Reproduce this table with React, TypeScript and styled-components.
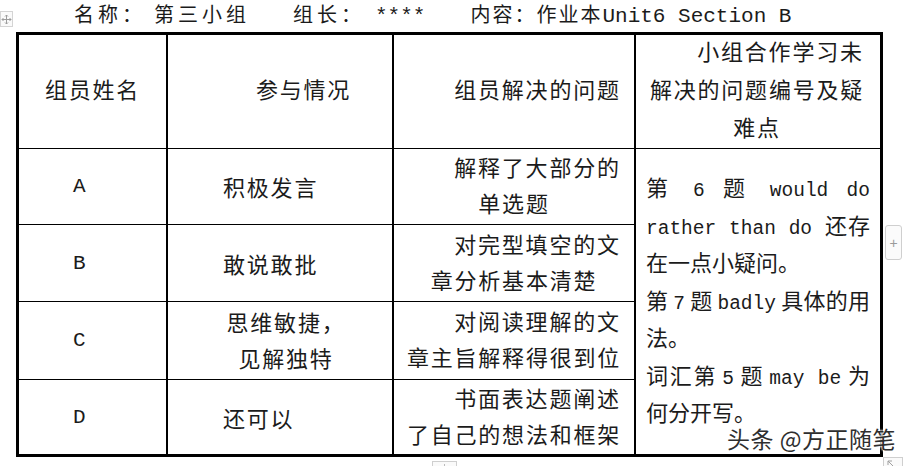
import React from "react";
import styled, { createGlobalStyle } from "styled-components";

const Global = createGlobalStyle`
  html, body { margin: 0; padding: 0; background: #fff; }
  body {
    font-family: "Noto Sans CJK SC", "Noto Sans", sans-serif;
    color: #1b1b1b;
    width: 910px;
    height: 466px;
    overflow: hidden;
  }
`;

const Page = styled.div`
  position: relative;
  width: 910px;
  height: 466px;
  box-sizing: border-box;
  padding-left: 16px;
  display: flex;
  flex-direction: column;
`;

const TitleBar = styled.div`
  height: 32px;
  flex: none;
  display: flex;
  align-items: center;
  padding-bottom: 4px;
  box-sizing: border-box;
  font-size: 20px;
  line-height: 28px;
  white-space: pre;
`;

const Field = styled.span<{ $ml: number; $ls: number }>`
  margin-left: ${(p) => p.$ml}px;
  letter-spacing: ${(p) => p.$ls}px;
`;

const Latin = styled.span<{ $size: number; $mx?: number }>`
  font-family: "Liberation Mono", monospace;
  font-size: ${(p) => p.$size}px;
  line-height: 1;
  letter-spacing: 0;
  margin: 0 ${(p) => p.$mx ?? 0}px;
`;

const Table = styled.div`
  display: grid;
  grid-template-columns: 149px 226px 242px 244px;
  grid-template-rows: 114px 76px 77px 78px 74px;
  width: 867px;
  flex: none;
  box-sizing: border-box;
  border: 3px solid #000;
`;

type CellProps = {
  $align?: "left" | "center";
  $pl?: number;
  $pr?: number;
  $pb?: number;
  $lastCol?: boolean;
  $lastRow?: boolean;
  $span?: number;
  $lh?: number;
  $ls?: number;
};

const Cell = styled.div<CellProps>`
  box-sizing: border-box;
  min-width: 0;
  border-right: ${(p) => (p.$lastCol ? "none" : "2px solid #000")};
  border-bottom: ${(p) => (p.$lastRow ? "none" : "1px solid #000")};
  grid-row: ${(p) => (p.$span ? `span ${p.$span}` : "auto")};
  display: flex;
  flex-direction: column;
  justify-content: center;
  padding-left: ${(p) => p.$pl ?? 0}px;
  padding-right: ${(p) => p.$pr ?? 0}px;
  padding-bottom: ${(p) => p.$pb ?? 0}px;
  text-align: ${(p) => p.$align ?? "center"};
  font-size: 22px;
  letter-spacing: ${(p) => p.$ls ?? 1.8}px;
  line-height: ${(p) => p.$lh ?? 37}px;
`;

const Line = styled.div<{ $indent?: boolean; $justify?: boolean }>`
  white-space: nowrap;
  text-indent: ${(p) => (p.$indent ? "47px" : "0")};
  ${(p) => (p.$justify ? `text-align: justify; text-align-last: justify;` : "")}
`;

const Watermark = styled.div`
  position: absolute;
  left: 727px;
  top: 424px;
  font-size: 23px;
  line-height: 28px;
  color: #2e2e2e;
  letter-spacing: 0.5px;
  white-space: pre;
  text-shadow: 0 0 2px #fff, 0 0 2px #fff, 0 0 3px #fff;
`;

const MoveHandle = styled.div`
  position: absolute;
  left: 0;
  top: 11px;
  width: 13px;
  height: 16px;
  box-sizing: border-box;
  border: 1px solid #d4d4d4;
  background: #fafafa;
  display: flex;
  align-items: center;
  justify-content: center;
`;

const AddButton = styled.div`
  position: absolute;
  left: 885px;
  top: 225px;
  width: 17px;
  height: 35px;
  box-sizing: border-box;
  border: 1px solid #cfcfcf;
  border-radius: 3px;
  background: #fbfbfb;
  color: #9a9a9a;
  font-family: "Liberation Sans", sans-serif;
  font-size: 14px;
  display: flex;
  align-items: center;
  justify-content: center;
`;

const BottomHandle = styled.div`
  position: absolute;
  left: 432px;
  top: 461px;
  width: 25px;
  height: 10px;
  box-sizing: border-box;
  border: 1px solid #cfcfcf;
  background: #fafafa;
  &::after {
    content: "";
    position: absolute;
    left: 11px;
    top: 2px;
    width: 1px;
    height: 6px;
    background: #bbb;
  }
`;

const CornerHandle = styled.div`
  position: absolute;
  left: 883px;
  top: 457px;
  width: 20px;
  height: 12px;
  box-sizing: border-box;
  border: 1px solid #cfcfcf;
  background: #fafafa;
  display: flex;
  align-items: flex-start;
  justify-content: flex-start;
  padding: 2px 0 0 3px;
`;

export default function App() {
  return (
    <>
      <Global />
      <Page>
        <TitleBar>
          <Field $ml={58} $ls={4}>名称：</Field>
          <Field $ml={8} $ls={4}>第三小组</Field>
          <Field $ml={43} $ls={4}>组长：</Field>
          <Field $ml={10} $ls={0}>
            <Latin $size={21}>****</Latin>
          </Field>
          <Field $ml={45} $ls={2}>
            内容：作业本<Latin $size={21}>Unit6 Section B</Latin>
          </Field>
        </TitleBar>

        <Table>
          {/* header */}
          <Cell $lh={38} $pb={8}>
            <Line>组员姓名</Line>
          </Cell>
          <Cell $lh={38} $pb={8}>
            <Line $indent>参与情况</Line>
          </Cell>
          <Cell $lh={38} $pb={8}>
            <Line $indent>组员解决的问题</Line>
          </Cell>
          <Cell $lastCol $lh={38} $pb={8} $pr={2}>
            <Line $indent>小组合作学习未</Line>
            <Line>解决的问题编号及疑</Line>
            <Line>难点</Line>
          </Cell>

          {/* row A */}
          <Cell $align="left" $pl={54}>
            <Latin $size={21}>A</Latin>
          </Cell>
          <Cell $align="left" $pl={55}>
            <Line>积极发言</Line>
          </Cell>
          <Cell $lh={36} $pb={5}>
            <Line $indent>解释了大部分的</Line>
            <Line>单选题</Line>
          </Cell>
          <Cell
            $lastCol
            $lastRow
            $span={4}
            $align="left"
            $pl={10}
            $pr={10}
            $pb={4}
            $lh={37.5}
            $ls={0}
          >
            <Line $justify>
              第<Latin $size={19.5}> 6 </Latin>题<Latin $size={19.5}> would do</Latin>
            </Line>
            <Line $justify>
              <Latin $size={19.5}>rather than do </Latin>还存
            </Line>
            <Line>在一点小疑问。</Line>
            <Line $justify>
              第<Latin $size={19.5} $mx={5}>7</Latin>题<Latin $size={19.5} $mx={5}>badly</Latin>具体的用
            </Line>
            <Line>法。</Line>
            <Line $justify>
              词汇第<Latin $size={19.5} $mx={5}>5</Latin>题<Latin $size={19.5} $mx={5}>may be</Latin>为
            </Line>
            <Line>何分开写。</Line>
          </Cell>

          {/* row B */}
          <Cell $align="left" $pl={54}>
            <Latin $size={21}>B</Latin>
          </Cell>
          <Cell $align="left" $pl={55}>
            <Line>敢说敢批</Line>
          </Cell>
          <Cell $lh={36} $pb={5}>
            <Line $indent>对完型填空的文</Line>
            <Line>章分析基本清楚</Line>
          </Cell>

          {/* row C */}
          <Cell $align="left" $pl={54}>
            <Latin $size={21}>C</Latin>
          </Cell>
          <Cell $pl={12} $lh={36} $pb={4}>
            <Line>思维敏捷，</Line>
            <Line>见解独特</Line>
          </Cell>
          <Cell $lh={36} $pb={5}>
            <Line $indent>对阅读理解的文</Line>
            <Line>章主旨解释得很到位</Line>
          </Cell>

          {/* row D */}
          <Cell $align="left" $pl={54} $lastRow>
            <Latin $size={21}>D</Latin>
          </Cell>
          <Cell $align="left" $pl={55} $lastRow>
            <Line>还可以</Line>
          </Cell>
          <Cell $lh={36} $pb={5} $lastRow>
            <Line $indent>书面表达题阐述</Line>
            <Line>了自己的想法和框架</Line>
          </Cell>
        </Table>

        <MoveHandle>
          <svg width="11" height="11" viewBox="0 0 11 11" fill="none" stroke="#9c9c9c" strokeWidth="1">
            <path d="M5.5 1v9M1 5.5h9" />
            <path d="M4 2.5l1.5-1.5 1.5 1.5M4 8.5l1.5 1.5 1.5-1.5M2.5 4L1 5.5 2.5 7M8.5 4L10 5.5 8.5 7" />
          </svg>
        </MoveHandle>
        <AddButton>+</AddButton>
        <BottomHandle />
        <CornerHandle>
          <svg width="8" height="7" viewBox="0 0 8 7" fill="none" stroke="#a0a0a0" strokeWidth="1">
            <path d="M1 1h4M1 1v4M1 1l5 5" />
          </svg>
        </CornerHandle>
        <Watermark>头条 @方正随笔</Watermark>
      </Page>
    </>
  );
}
